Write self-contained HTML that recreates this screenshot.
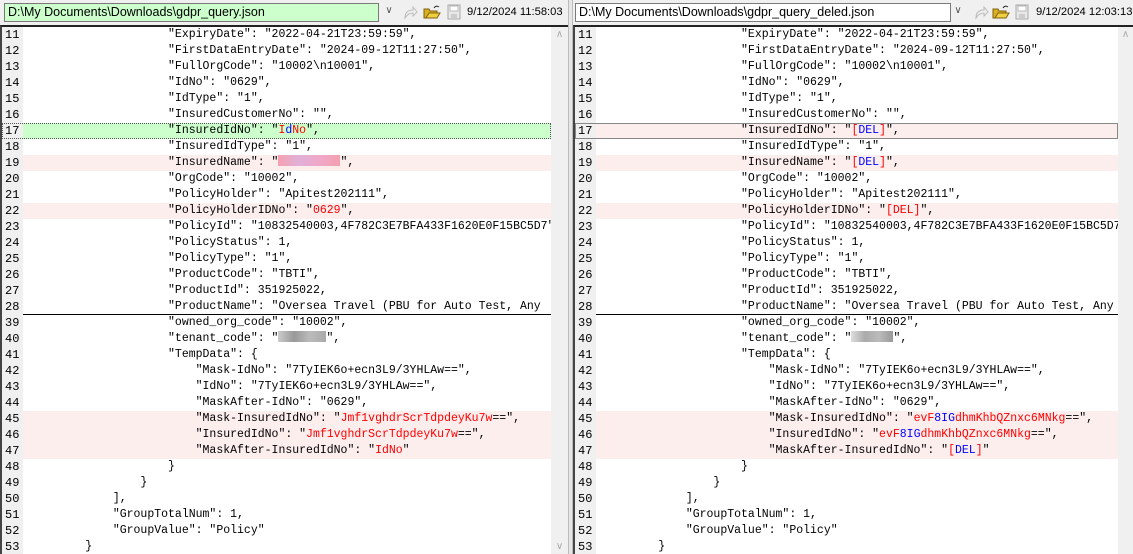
<!DOCTYPE html>
<html><head><meta charset="utf-8"><style>
*{margin:0;padding:0;box-sizing:border-box}
body{width:1133px;height:554px;overflow:hidden;background:#f0f0f0;font-family:"Liberation Sans",sans-serif;position:relative}
.hdr{position:absolute;top:0;height:25px;background:#f0f0f0;overflow:hidden}
.path{position:absolute;top:3px;height:19px;border:1px solid #7a7a7a;font-size:12.5px;line-height:17px;padding-left:3px;color:#000;white-space:nowrap;overflow:hidden}
.dd{position:absolute;top:4px;width:14px;height:14px;font-size:10px;color:#555;text-align:center;line-height:14px}
.date{position:absolute;top:4px;font-size:11.2px;line-height:16px;color:#000;white-space:nowrap}
.pane{position:absolute;top:25px;height:529px;background:#fff;border-top:2px solid #222;border-left:2px solid #444;overflow:hidden}
.gut{position:absolute;left:0;top:0;bottom:0;width:21px;background:#f0f0f0}
.rows{position:absolute;left:0;top:0;right:0;overflow:hidden}
.r{height:16px;line-height:16px;font-family:"Liberation Mono","Courier New",monospace;font-size:11.5px;white-space:pre;position:relative;color:#000}
.r .n{display:inline-block;width:21px;padding-left:3px;background:#f0f0f0;color:#000;height:16px;font-size:12px}
.r .c{position:absolute;left:28px;top:0}
.pk{background:#fdeeee}
.gr{background:#ccffcc;outline:1px dotted #555;outline-offset:-1px}
.ul{border-bottom:1px solid #000;height:16px}
.rd{color:#f00}.bl{color:#00f}
.sb{position:absolute;top:0;bottom:0;width:17px;background:#f0f0f0}
.blur{display:inline-block;height:11px;vertical-align:-1px}
</style></head><body>

<div class="hdr" style="left:0;width:568px">
<div class="path" style="left:4px;width:375px;background:#ccffcc">D:\My Documents\Downloads\gdpr_query.json</div>
<div class="dd" style="left:382px">&#8744;</div>
<svg style="position:absolute;left:402px;top:5px" width="16" height="15"><path d="M3 13 Q3 5 11 5 L11 2 L15 7 L11 11 L11 8 Q6 8 3 13Z" fill="none" stroke="#bbb"/></svg>
<svg style="position:absolute;left:423px;top:4px" width="18" height="16"><path d="M1 5 L6 5 L7 7 L14 7 L14 14 L1 14Z" fill="#d8b020" stroke="#806010"/><path d="M3 14 L6 9 L17 9 L14 14Z" fill="#f0d040" stroke="#806010"/><path d="M11 4 Q13 1 16 3" fill="none" stroke="#333"/></svg>
<svg style="position:absolute;left:447px;top:4px" width="14" height="16"><rect x="1" y="1" width="12" height="14" fill="#e8e8e8" stroke="#aaa"/><rect x="3" y="2" width="8" height="5" fill="#fff" stroke="#bbb"/><rect x="4" y="10" width="6" height="4" fill="#ccc"/></svg>
<div class="date" style="left:467px">9/12/2024 11:58:03</div>
</div>

<div class="hdr" style="left:573px;width:560px">
<div class="path" style="left:2px;width:376px;background:#fff">D:\My Documents\Downloads\gdpr_query_deled.json</div>
<div class="dd" style="left:378px">&#8744;</div>
<svg style="position:absolute;left:400px;top:5px" width="16" height="15"><path d="M3 13 Q3 5 11 5 L11 2 L15 7 L11 11 L11 8 Q6 8 3 13Z" fill="none" stroke="#bbb"/></svg>
<svg style="position:absolute;left:419px;top:4px" width="18" height="16"><path d="M1 5 L6 5 L7 7 L14 7 L14 14 L1 14Z" fill="#d8b020" stroke="#806010"/><path d="M3 14 L6 9 L17 9 L14 14Z" fill="#f0d040" stroke="#806010"/><path d="M11 4 Q13 1 16 3" fill="none" stroke="#333"/></svg>
<div style="position:absolute;left:442px;top:4px"><svg width="14" height="16"><rect x="1" y="1" width="12" height="14" fill="#e8e8e8" stroke="#aaa"/><rect x="3" y="2" width="8" height="5" fill="#fff" stroke="#bbb"/><rect x="4" y="10" width="6" height="4" fill="#ccc"/></svg></div>
<div class="date" style="left:463px">9/12/2024 12:03:13</div>
</div>

<div style="position:absolute;left:568px;top:0;width:5px;height:554px;background:#e6e6e6;border-left:1px solid #bbb;border-right:1px solid #bbb"></div>

<div class="pane" style="left:0;width:568px">
<div class="gut"></div>
<div class="rows" style="right:17px">
<div class="r"><span class="n">11</span><span class="c">                    "ExpiryDate": "2022-04-21T23:59:59",</span></div>
<div class="r"><span class="n">12</span><span class="c">                    "FirstDataEntryDate": "2024-09-12T11:27:50",</span></div>
<div class="r"><span class="n">13</span><span class="c">                    "FullOrgCode": "10002\n10001",</span></div>
<div class="r"><span class="n">14</span><span class="c">                    "IdNo": "0629",</span></div>
<div class="r"><span class="n">15</span><span class="c">                    "IdType": "1",</span></div>
<div class="r"><span class="n">16</span><span class="c">                    "InsuredCustomerNo": "",</span></div>
<div class="r gr"><span class="n">17</span><span class="c">                    "InsuredIdNo": "<span class="rd">I</span><span class="bl">d</span><span class="rd">No</span>",</span></div>
<div class="r"><span class="n">18</span><span class="c">                    "InsuredIdType": "1",</span></div>
<div class="r pk"><span class="n">19</span><span class="c">                    "InsuredName": "<span class="blur" style="width:62px;background:linear-gradient(90deg,#f7a0b0,#e0b0d8,#f0a8c8,#f4a0b0)"></span>",</span></div>
<div class="r"><span class="n">20</span><span class="c">                    "OrgCode": "10002",</span></div>
<div class="r"><span class="n">21</span><span class="c">                    "PolicyHolder": "Apitest202111",</span></div>
<div class="r pk"><span class="n">22</span><span class="c">                    "PolicyHolderIDNo": "<span class="rd">0629</span>",</span></div>
<div class="r"><span class="n">23</span><span class="c">                    "PolicyId": "10832540003,4F782C3E7BFA433F1620E0F15BC5D7",</span></div>
<div class="r"><span class="n">24</span><span class="c">                    "PolicyStatus": 1,</span></div>
<div class="r"><span class="n">25</span><span class="c">                    "PolicyType": "1",</span></div>
<div class="r"><span class="n">26</span><span class="c">                    "ProductCode": "TBTI",</span></div>
<div class="r"><span class="n">27</span><span class="c">                    "ProductId": 351925022,</span></div>
<div class="r ul"><span class="n">28</span><span class="c">                    "ProductName": "Oversea Travel (PBU for Auto Test, Any</span></div>
<div class="r"><span class="n">39</span><span class="c">                    "owned_org_code": "10002",</span></div>
<div class="r"><span class="n">40</span><span class="c">                    "tenant_code": "<span class="blur" style="width:48px;background:linear-gradient(90deg,#ccc,#999,#bbb,#aaa)"></span>",</span></div>
<div class="r"><span class="n">41</span><span class="c">                    "TempData": {</span></div>
<div class="r"><span class="n">42</span><span class="c">                        "Mask-IdNo": "7TyIEK6o+ecn3L9/3YHLAw==",</span></div>
<div class="r"><span class="n">43</span><span class="c">                        "IdNo": "7TyIEK6o+ecn3L9/3YHLAw==",</span></div>
<div class="r"><span class="n">44</span><span class="c">                        "MaskAfter-IdNo": "0629",</span></div>
<div class="r pk"><span class="n">45</span><span class="c">                        "Mask-InsuredIdNo": "<span class="rd">Jmf1vghdrScrTdpdeyKu7w</span>==",</span></div>
<div class="r pk"><span class="n">46</span><span class="c">                        "InsuredIdNo": "<span class="rd">Jmf1vghdrScrTdpdeyKu7w</span>==",</span></div>
<div class="r pk"><span class="n">47</span><span class="c">                        "MaskAfter-InsuredIdNo": "<span class="rd">IdNo</span>"</span></div>
<div class="r"><span class="n">48</span><span class="c">                    }</span></div>
<div class="r"><span class="n">49</span><span class="c">                }</span></div>
<div class="r"><span class="n">50</span><span class="c">            ],</span></div>
<div class="r"><span class="n">51</span><span class="c">            "GroupTotalNum": 1,</span></div>
<div class="r"><span class="n">52</span><span class="c">            "GroupValue": "Policy"</span></div>
<div class="r"><span class="n">53</span><span class="c">        }</span></div>
</div>
<div class="sb" style="right:0"><div style="text-align:center;color:#aaa;font-size:10px;margin-top:2px">&#8743;</div><div style="position:absolute;bottom:2px;width:17px;text-align:center;color:#aaa;font-size:10px">&#8744;</div></div>
</div>

<div class="pane" style="left:573px;width:560px">
<div class="gut"></div>
<div class="rows" style="right:15px">
<div class="r"><span class="n">11</span><span class="c">                    "ExpiryDate": "2022-04-21T23:59:59",</span></div>
<div class="r"><span class="n">12</span><span class="c">                    "FirstDataEntryDate": "2024-09-12T11:27:50",</span></div>
<div class="r"><span class="n">13</span><span class="c">                    "FullOrgCode": "10002\n10001",</span></div>
<div class="r"><span class="n">14</span><span class="c">                    "IdNo": "0629",</span></div>
<div class="r"><span class="n">15</span><span class="c">                    "IdType": "1",</span></div>
<div class="r"><span class="n">16</span><span class="c">                    "InsuredCustomerNo": "",</span></div>
<div class="r pk" style="outline:1px solid #888;outline-offset:-1px"><span class="n">17</span><span class="c">                    "InsuredIdNo": "<span class="rd">[</span><span class="bl">DEL</span><span class="rd">]</span>",</span></div>
<div class="r"><span class="n">18</span><span class="c">                    "InsuredIdType": "1",</span></div>
<div class="r pk"><span class="n">19</span><span class="c">                    "InsuredName": "<span class="rd">[</span><span class="bl">DEL</span><span class="rd">]</span>",</span></div>
<div class="r"><span class="n">20</span><span class="c">                    "OrgCode": "10002",</span></div>
<div class="r"><span class="n">21</span><span class="c">                    "PolicyHolder": "Apitest202111",</span></div>
<div class="r pk"><span class="n">22</span><span class="c">                    "PolicyHolderIDNo": "<span class="rd">[DEL]</span>",</span></div>
<div class="r"><span class="n">23</span><span class="c">                    "PolicyId": "10832540003,4F782C3E7BFA433F1620E0F15BC5D7",</span></div>
<div class="r"><span class="n">24</span><span class="c">                    "PolicyStatus": 1,</span></div>
<div class="r"><span class="n">25</span><span class="c">                    "PolicyType": "1",</span></div>
<div class="r"><span class="n">26</span><span class="c">                    "ProductCode": "TBTI",</span></div>
<div class="r"><span class="n">27</span><span class="c">                    "ProductId": 351925022,</span></div>
<div class="r ul"><span class="n">28</span><span class="c">                    "ProductName": "Oversea Travel (PBU for Auto Test, Any</span></div>
<div class="r"><span class="n">39</span><span class="c">                    "owned_org_code": "10002",</span></div>
<div class="r"><span class="n">40</span><span class="c">                    "tenant_code": "<span class="blur" style="width:42px;background:linear-gradient(90deg,#ddd,#aaa,#bbb,#999)"></span>",</span></div>
<div class="r"><span class="n">41</span><span class="c">                    "TempData": {</span></div>
<div class="r"><span class="n">42</span><span class="c">                        "Mask-IdNo": "7TyIEK6o+ecn3L9/3YHLAw==",</span></div>
<div class="r"><span class="n">43</span><span class="c">                        "IdNo": "7TyIEK6o+ecn3L9/3YHLAw==",</span></div>
<div class="r"><span class="n">44</span><span class="c">                        "MaskAfter-IdNo": "0629",</span></div>
<div class="r pk"><span class="n">45</span><span class="c">                        "Mask-InsuredIdNo": "<span class="rd">evF</span><span class="bl">8IG</span><span class="rd">dhmKhbQZnxc6MNkg</span>==",</span></div>
<div class="r pk"><span class="n">46</span><span class="c">                        "InsuredIdNo": "<span class="rd">evF</span><span class="bl">8IG</span><span class="rd">dhmKhbQZnxc6MNkg</span>==",</span></div>
<div class="r pk"><span class="n">47</span><span class="c">                        "MaskAfter-InsuredIdNo": "<span class="rd">[</span><span class="bl">DEL</span><span class="rd">]</span>"</span></div>
<div class="r"><span class="n">48</span><span class="c">                    }</span></div>
<div class="r"><span class="n">49</span><span class="c">                }</span></div>
<div class="r"><span class="n">50</span><span class="c">            ],</span></div>
<div class="r"><span class="n">51</span><span class="c">            "GroupTotalNum": 1,</span></div>
<div class="r"><span class="n">52</span><span class="c">            "GroupValue": "Policy"</span></div>
<div class="r"><span class="n">53</span><span class="c">        }</span></div>
</div>
<div class="sb" style="right:0;width:15px"><div style="text-align:center;color:#aaa;font-size:10px;margin-top:2px">&#8743;</div></div>
</div>
</body></html>
